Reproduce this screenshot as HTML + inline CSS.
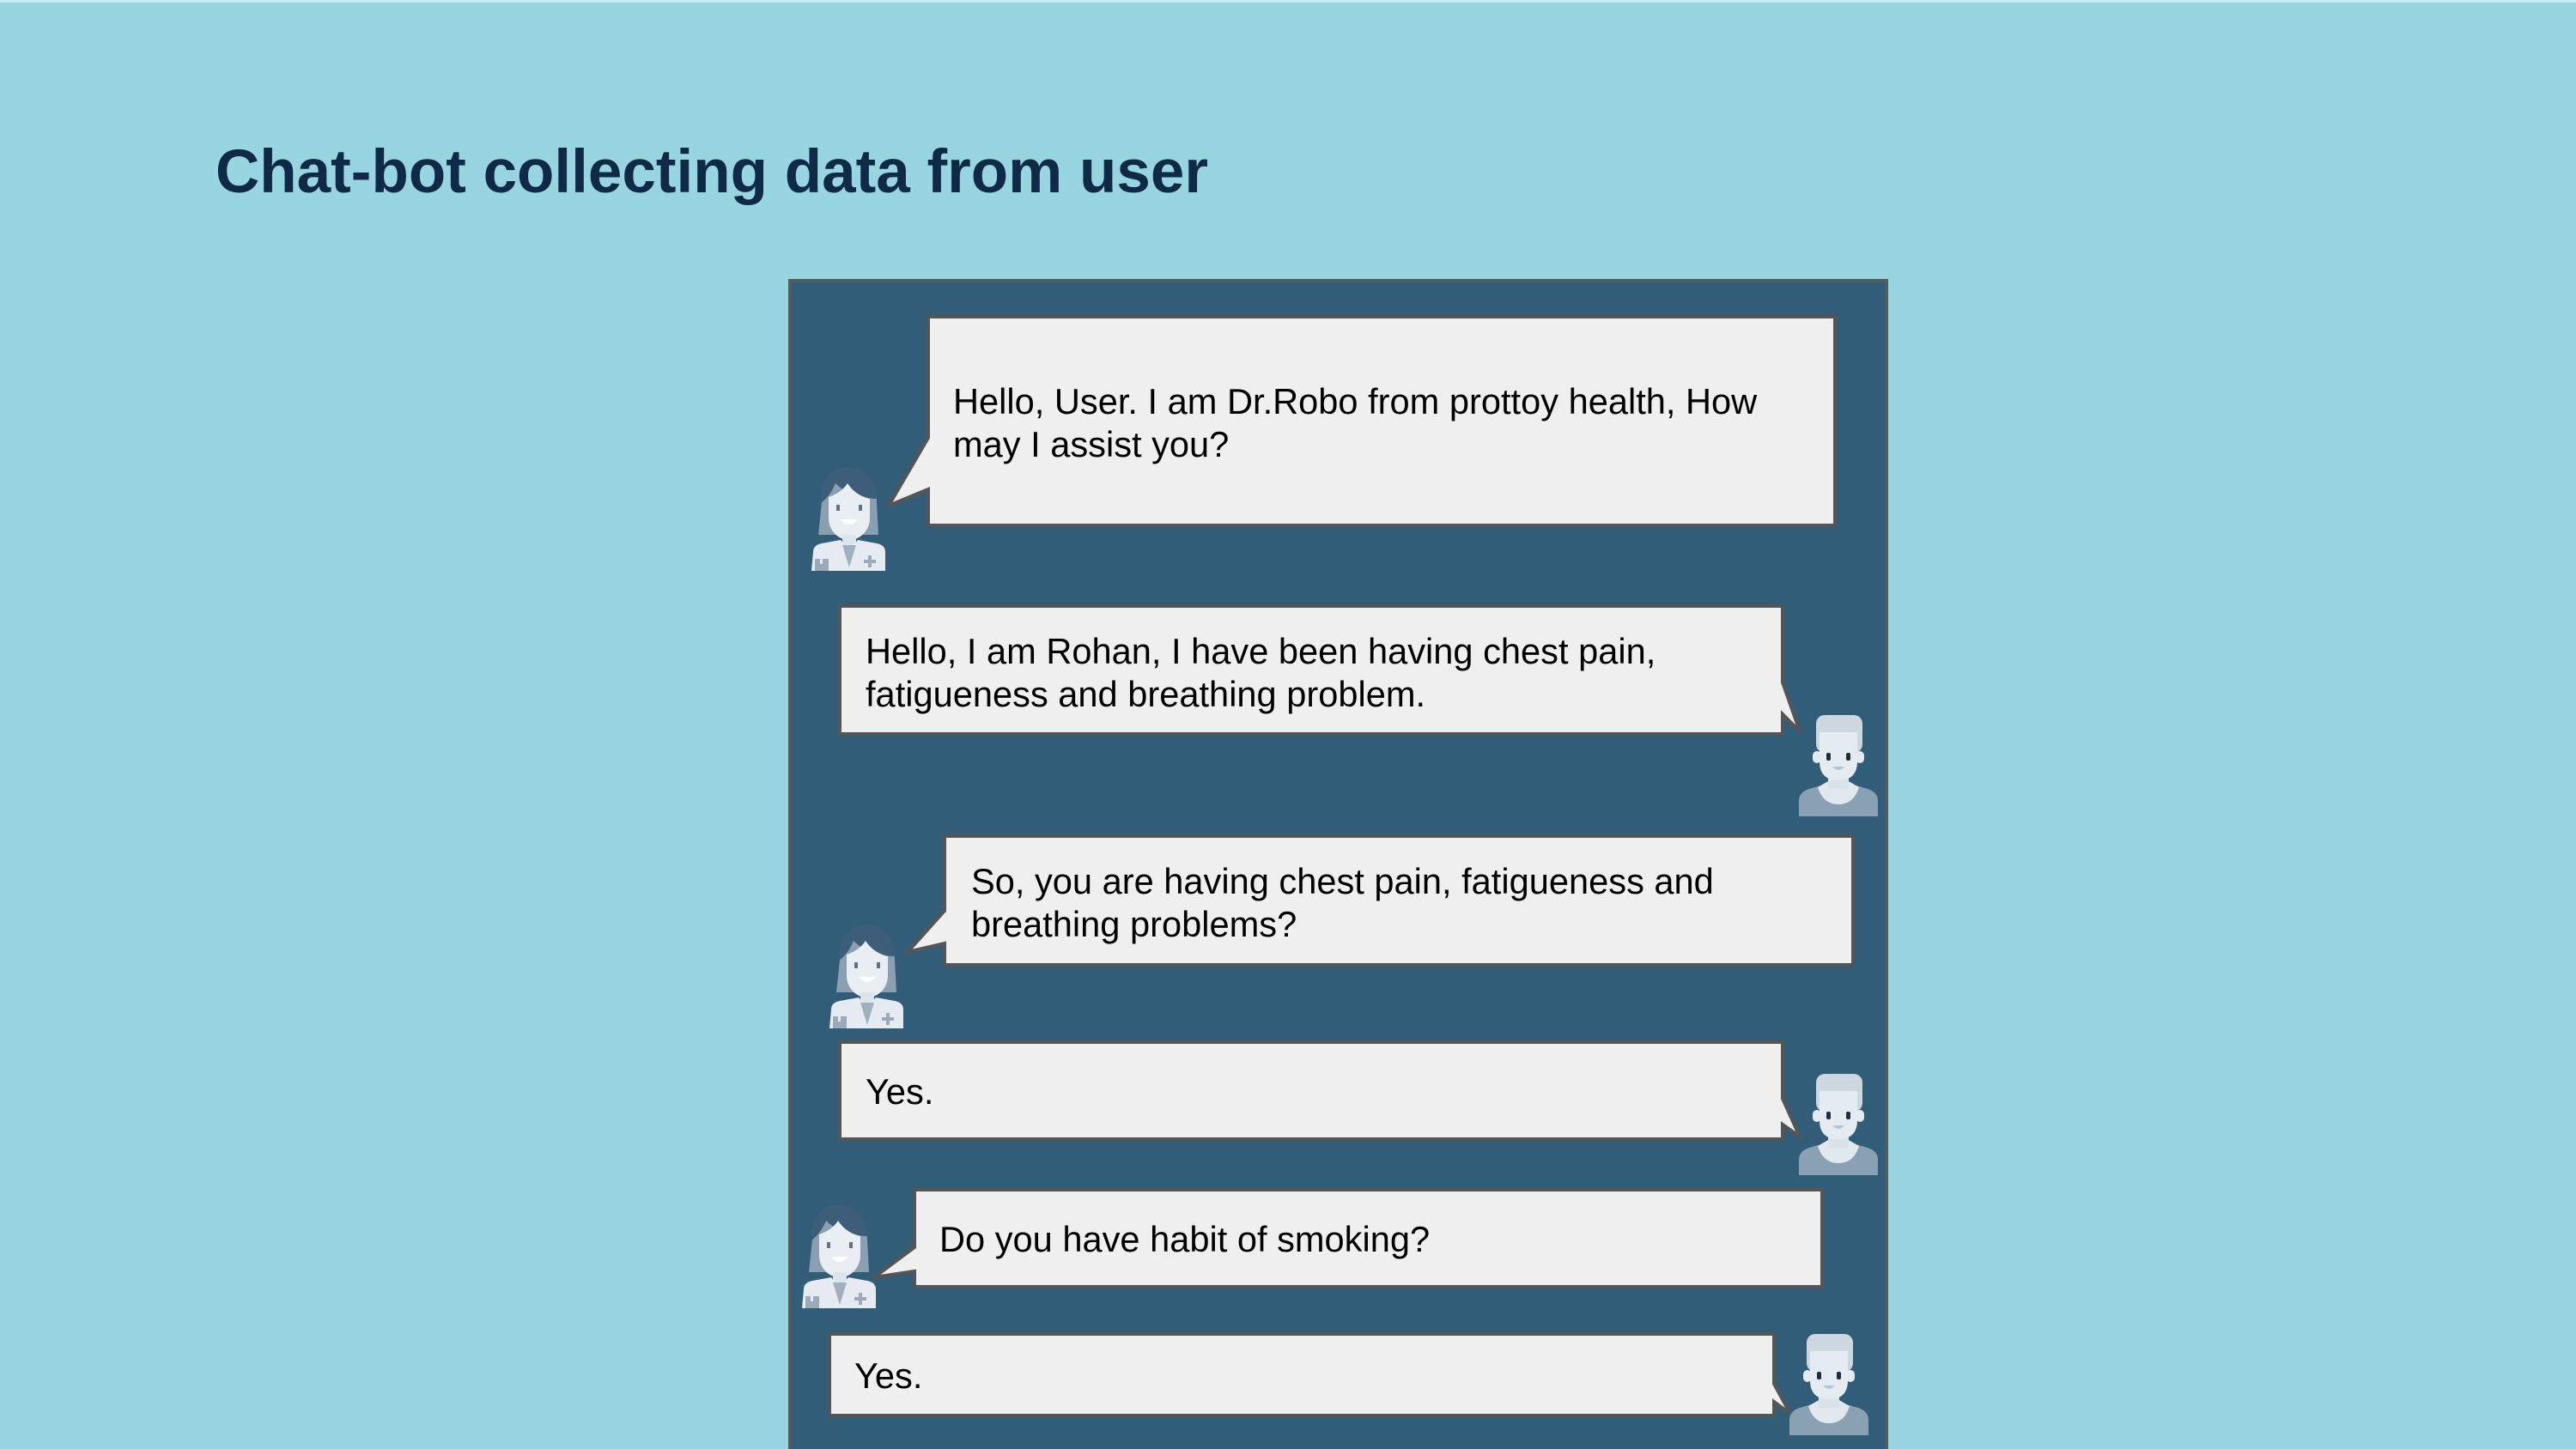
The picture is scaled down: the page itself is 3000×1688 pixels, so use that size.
<!DOCTYPE html>
<html><head><meta charset="utf-8"><style>
html,body{margin:0;padding:0;background:#97d6e0;}
svg{display:block}
</style></head><body>
<svg width="3000" height="1688" viewBox="0 0 3000 1688" xmlns="http://www.w3.org/2000/svg">
<defs>
<symbol id="doc" viewBox="0 0 90 120">
  <path d="M14,40 C14,10 30,0 45,0 C62,0 78,12 78,40 L80,78 L10,78 Z" fill="#8a9fb2"/>
  <path d="M14,40 C14,10 30,0 45,0 C62,0 78,12 78,36 C60,36 42,30 30,18 C26,28 20,36 14,40 Z" fill="#3d5d78"/>
  <path d="M22,34 C34,30 40,24 44,18 C52,30 62,34 70,36 L70,58 C70,74 58,84 46,84 C34,84 22,74 22,58 Z" fill="#e8eef2"/>
  <rect x="31" y="43" width="4" height="7" fill="#5e7386"/>
  <rect x="57" y="43" width="4" height="7" fill="#5e7386"/>
  <path d="M36,60 Q46,72 56,60 Z" fill="#ffffff"/>
  <rect x="38" y="78" width="16" height="14" fill="#dde5ec"/>
  <path d="M4,98 Q4,90 14,88 L36,84 L46,96 L56,84 L78,88 Q88,90 88,98 L88,120 L2,120 Z" fill="#e5ebf0"/>
  <path d="M38,90 L46,116 L54,90 Z" fill="#9fb0bf"/>
  <rect x="6" y="106" width="16" height="14" fill="#9aaabb"/>
  <rect x="12" y="100" width="3" height="12" fill="#e5ebf0"/>
  <rect x="68" y="102" width="4" height="14" fill="#9aaabb"/>
  <rect x="63" y="107" width="14" height="4" fill="#9aaabb"/>
</symbol>
<symbol id="boy" viewBox="0 0 92 118">
  <path d="M0,100 Q0,90 12,86 L40,78 L52,78 L80,86 Q92,90 92,100 L92,118 L0,118 Z" fill="#8aa0b3"/>
  <path d="M22,84 L36,76 L56,76 L70,84 Q64,104 46,104 Q28,104 22,84 Z" fill="#e1e8ee"/>
  <rect x="34" y="64" width="24" height="22" fill="#dbe3ea"/>
  <rect x="20" y="0" width="54" height="44" rx="10" fill="#ccd7e0"/>
  <rect x="16" y="42" width="10" height="14" rx="5" fill="#e3eaf0"/>
  <rect x="66" y="42" width="10" height="14" rx="5" fill="#e3eaf0"/>
  <path d="M24,20 L68,20 L68,54 Q68,76 46,76 Q24,76 24,54 Z" fill="#e4ebf1"/>
  <rect x="32" y="44" width="5" height="9" rx="2" fill="#1d2e3f"/>
  <rect x="55" y="44" width="5" height="9" rx="2" fill="#1d2e3f"/>
  <path d="M39,60 Q46,68 53,60 Z" fill="#b6c5d2"/>
</symbol>
</defs>
<rect x="0" y="0" width="3000" height="3" fill="#c8e8ee"/>
<text x="251" y="224" font-family="Liberation Sans, sans-serif" font-weight="bold" font-size="71" fill="#0f2946" textLength="1156" lengthAdjust="spacingAndGlyphs">Chat-bot collecting data from user</text>
<rect x="920" y="327" width="1277" height="1370" fill="#325d79" stroke="#555a5e" stroke-width="4"/>
<g fill="#efefef" stroke="#555555" stroke-width="4" stroke-linejoin="miter">
  <path d="M1081,369 H2137 V612 H1081 V570 L1035,589 L1081,510 Z"/>
  <path d="M978,706 H2076 V795 L2096,852 L2076,832 V855 H978 Z"/>
  <path d="M1100,974 H2158 V1124 H1100 V1099 L1057,1109 L1100,1061 Z"/>
  <path d="M978,1214 H2076 V1280 L2096,1324 L2076,1310 V1327 H978 Z"/>
  <path d="M1065,1386 H2122 V1499 H1065 V1481 L1018,1488 L1065,1453 Z"/>
  <path d="M966,1554 H2066 V1612 L2085,1647 L2066,1633 V1649 H966 Z"/>
</g>
<g font-family="Liberation Sans, Arial, sans-serif" font-size="41.6" fill="#000">
  <text x="1110" y="482">Hello, User. I am Dr.Robo from prottoy health, How</text>
  <text x="1110" y="532">may I assist you?</text>
  <text x="1008" y="773">Hello, I am Rohan, I have been having chest pain,</text>
  <text x="1008" y="823">fatigueness and breathing problem.</text>
  <text x="1131" y="1041">So, you are having chest pain, fatigueness and</text>
  <text x="1131" y="1091">breathing problems?</text>
  <text x="1008" y="1286">Yes.</text>
  <text x="1094" y="1458">Do you have habit of smoking?</text>
  <text x="995" y="1617">Yes.</text>
</g>
<use href="#doc" x="943" y="545" width="90" height="120"/>
<use href="#doc" x="964" y="1078" width="90" height="120"/>
<use href="#doc" x="932" y="1404" width="90" height="120"/>
<use href="#boy" x="2095" y="833" width="92" height="118"/>
<use href="#boy" x="2095" y="1251" width="92" height="118"/>
<use href="#boy" x="2084" y="1554" width="92" height="118"/>
</svg>
</body></html>
